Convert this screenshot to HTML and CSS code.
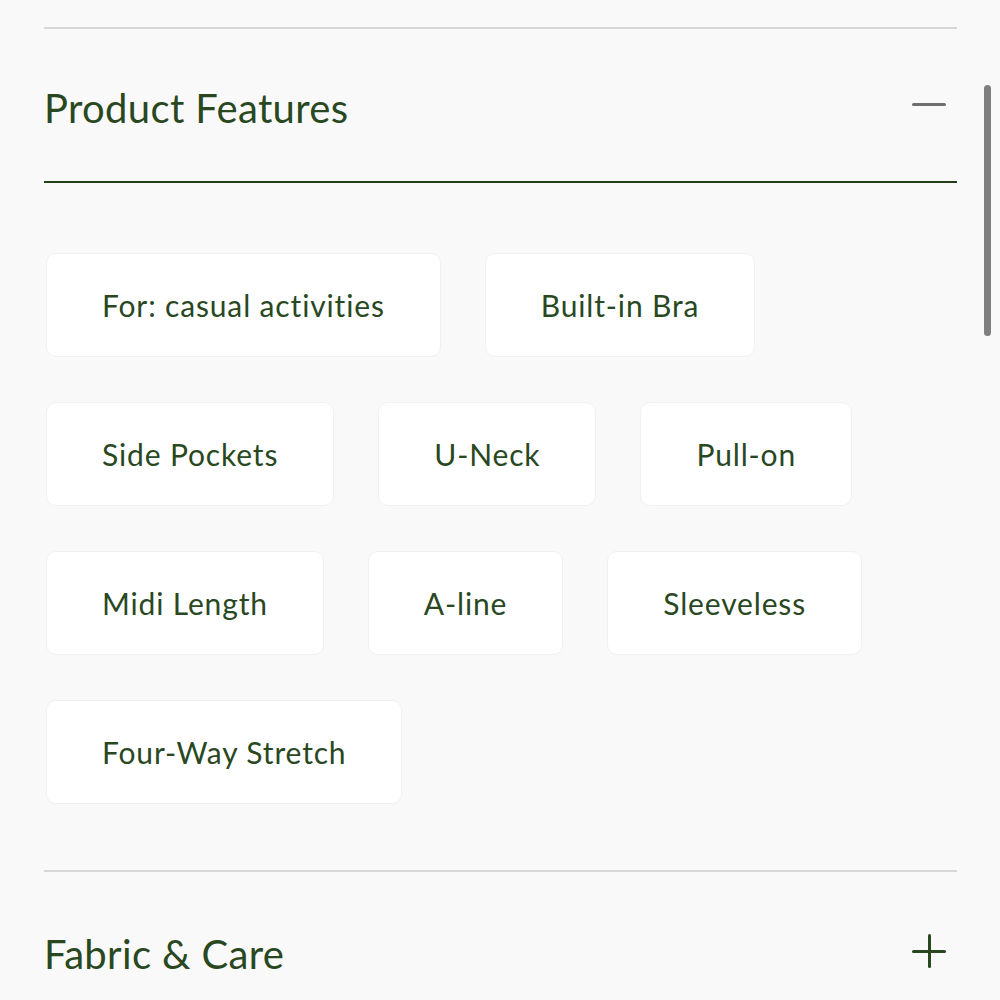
FILE: index.html
```html
<!DOCTYPE html>
<html lang="en">
<head>
<meta charset="utf-8">
<link rel="stylesheet" href="styles.css">
</head>
<body>
<div class="page">
  <section class="acc acc-open">
    <div class="acc-head">
      <h2 class="acc-title">Product Features</h2>
      <span class="icon icon-minus"></span>
    </div>
    <div class="chips">
      <div class="chip">For: casual activities</div>
      <div class="chip">Built-in Bra</div>
      <div class="chip">Side Pockets</div>
      <div class="chip">U-Neck</div>
      <div class="chip">Pull-on</div>
      <div class="chip">Midi Length</div>
      <div class="chip">A-line</div>
      <div class="chip">Sleeveless</div>
      <div class="chip">Four-Way Stretch</div>
    </div>
  </section>
  <section class="acc">
    <div class="acc-head acc-head-closed">
      <h2 class="acc-title">Fabric &amp; Care</h2>
      <span class="icon icon-plus"></span>
    </div>
  </section>
</div>
<div class="scrollbar"></div>
</body>
</html>
```
FILE: styles.css
```css
html, body {
  margin: 0;
  padding: 0;
  background: #f9f9f9;
  height: 1000px;
  overflow: hidden;
}
body {
  font-family: Lato, "Noto Sans", sans-serif;
  color: #29481f;
}
.page {
  padding: 27px 43px 0 44px;
}
.acc {
  border-top: 2px solid #d7d7d7;
}
.acc-head {
  height: 152px;
  display: flex;
  align-items: center;
  justify-content: space-between;
  border-bottom: 2px solid #21401a;
}
.acc-head-closed {
  height: 158px;
  border-bottom: none;
}
.acc-title {
  margin: 0;
  padding-top: 5px;
  font-weight: 400;
  font-size: 40px;
  letter-spacing: 0.35px;
  color: #29481f;
}
.icon {
  position: relative;
  width: 34px;
  height: 34px;
  margin-right: 11px;
}
.icon-minus::before,
.icon-plus::before,
.icon-plus::after {
  content: "";
  position: absolute;
  border-radius: 2px;
}
.icon-minus::before {
  left: 0;
  right: 0;
  top: 15px;
  height: 3px;
  background: #6f6f6f;
}
.icon-plus::before {
  left: 0;
  right: 0;
  top: 16px;
  height: 3px;
  background: #29481f;
}
.icon-plus::after {
  top: 0;
  bottom: 0;
  left: 16px;
  width: 3px;
  background: #29481f;
}
.chips {
  display: flex;
  flex-wrap: wrap;
  gap: 45px 44px;
  padding: 70px 0 66px 2px;
}
.chip {
  height: 104px;
  box-sizing: border-box;
  padding: 0 55px;
  display: flex;
  align-items: center;
  background: #ffffff;
  border: 1px solid #f1f1f1;
  border-radius: 10px;
  font-size: 30px;
  letter-spacing: 0.85px;
  color: #29481f;
}
.scrollbar {
  position: absolute;
  left: 984px;
  top: 85px;
  width: 7px;
  height: 251px;
  border-radius: 4px;
  background: #7f7f7f;
}
```
